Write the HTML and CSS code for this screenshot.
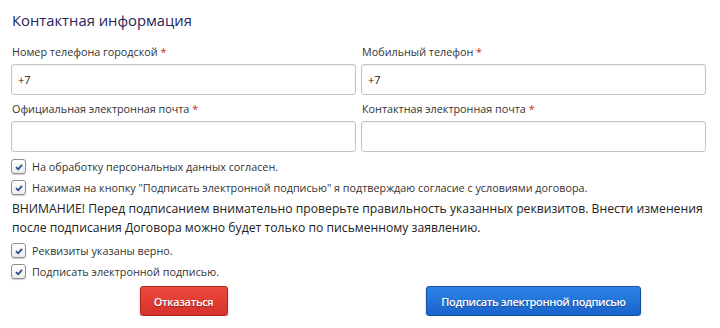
FILE: index.html
```html
<!DOCTYPE html>
<html lang="ru">
<head>
<meta charset="utf-8">
<title>Контактная информация</title>
<link rel="stylesheet" href="styles.css">
</head>
<body>
<div class="page">
  <h1 class="title">Контактная информация</h1>
  <div class="grid">
    <div class="field">
      <label class="label">Номер телефона городской <span class="req">*</span></label>
      <div class="input">+7</div>
    </div>
    <div class="field">
      <label class="label">Мобильный телефон <span class="req">*</span></label>
      <div class="input">+7</div>
    </div>
    <div class="field">
      <label class="label">Официальная электронная почта <span class="req">*</span></label>
      <div class="input"></div>
    </div>
    <div class="field">
      <label class="label">Контактная электронная почта <span class="req">*</span></label>
      <div class="input"></div>
    </div>
  </div>
  <div class="checks first">
    <div class="check"><span class="box"><svg viewBox="0 0 10 10" width="10" height="10"><polyline points="2,5.2 4.2,7.3 8,2.8" fill="none" stroke="#2a4c8e" stroke-width="1.8"/></svg></span><span class="ctext">На обработку персональных данных согласен.</span></div>
    <div class="check"><span class="box"><svg viewBox="0 0 10 10" width="10" height="10"><polyline points="2,5.2 4.2,7.3 8,2.8" fill="none" stroke="#2a4c8e" stroke-width="1.8"/></svg></span><span class="ctext">Нажимая на кнопку "Подписать электронной подписью" я подтверждаю согласие с условиями договора.</span></div>
  </div>
  <p class="warning">ВНИМАНИЕ! Перед подписанием внимательно проверьте правильность указанных реквизитов. Внести изменения после подписания Договора можно будет только по письменному заявлению.</p>
  <div class="checks second">
    <div class="check"><span class="box"><svg viewBox="0 0 10 10" width="10" height="10"><polyline points="2,5.2 4.2,7.3 8,2.8" fill="none" stroke="#2a4c8e" stroke-width="1.8"/></svg></span><span class="ctext">Реквизиты указаны верно.</span></div>
    <div class="check"><span class="box"><svg viewBox="0 0 10 10" width="10" height="10"><polyline points="2,5.2 4.2,7.3 8,2.8" fill="none" stroke="#2a4c8e" stroke-width="1.8"/></svg></span><span class="ctext">Подписать электронной подписью.</span></div>
  </div>
  <div class="actions">
    <div class="cell"><button class="btn btn-red">Отказаться</button></div>
    <div class="cell"><button class="btn btn-blue">Подписать электронной подписью</button></div>
  </div>
</div>
</body>
</html>
```
FILE: styles.css
```css
html, body {
  margin: 0;
  padding: 0;
  background: #ffffff;
}
body {
  font-family: "Open Sans", "Liberation Sans", sans-serif;
  color: #333333;
}
.page {
  width: 709px;
  padding: 9px 0 0 11px;
}
.title {
  margin: 0 0 13px 1px;
  font-size: 14.8px;
  line-height: 22px;
  font-weight: 400;
  color: #1f2557;
}
.grid {
  display: grid;
  grid-template-columns: 345px 345px;
  column-gap: 5px;
  row-gap: 6px;
}
.field {
  display: flex;
  flex-direction: column;
  gap: 4px;
}
.label {
  font-size: 10.8px;
  line-height: 16px;
  padding-left: 1px;
  color: #333333;
}
.req {
  color: #d0262b;
}
.input {
  box-sizing: border-box;
  height: 31px;
  border: 1px solid #c4c4c4;
  border-radius: 3px;
  box-shadow: inset 0 1px 2px rgba(0,0,0,0.06);
  font-size: 11px;
  line-height: 29px;
  padding-left: 6px;
  color: #222222;
}
.checks {
  display: flex;
  flex-direction: column;
  gap: 6px;
}
.checks.first {
  margin-top: 7px;
}
.checks.second {
  margin-top: 6px;
}
.check {
  display: flex;
  align-items: center;
  gap: 6px;
  height: 15px;
}
.box {
  box-sizing: border-box;
  width: 15px;
  height: 15px;
  border: 1px solid #8f8f8f;
  border-radius: 3px;
  background: linear-gradient(#ffffff, #ececec);
  box-shadow: 0 1px 1px rgba(0,0,0,0.2);
  display: flex;
  align-items: center;
  justify-content: center;
}
.box svg {
  display: block;
}
.ctext {
  font-size: 10.8px;
  line-height: 15px;
  color: #333333;
}
.warning {
  margin: 4px 0 0 1px;
  font-size: 12.2px;
  line-height: 19px;
  color: #222222;
}
.actions {
  display: grid;
  grid-template-columns: 345px 345px;
  column-gap: 5px;
  margin-top: 7px;
}
.cell {
  display: flex;
  justify-content: center;
}
.btn {
  height: 30px;
  border-radius: 3px;
  font-family: "Open Sans", "Liberation Sans", sans-serif;
  font-size: 11px;
  font-weight: 600;
  letter-spacing: -0.35px;
  color: #ffffff;
  text-shadow: 0 1px 1px rgba(0,0,0,0.35);
  box-shadow: 0 1px 2px rgba(0,0,0,0.3);
  padding: 0;
  cursor: pointer;
}
.btn-red {
  width: 88px;
  background: linear-gradient(#ec4a3f, #d6302a);
  border: 1px solid #b3261f;
}
.btn-blue {
  width: 215px;
  background: linear-gradient(#2c84e6, #1a63cc);
  border: 1px solid #1550a6;
}
```
